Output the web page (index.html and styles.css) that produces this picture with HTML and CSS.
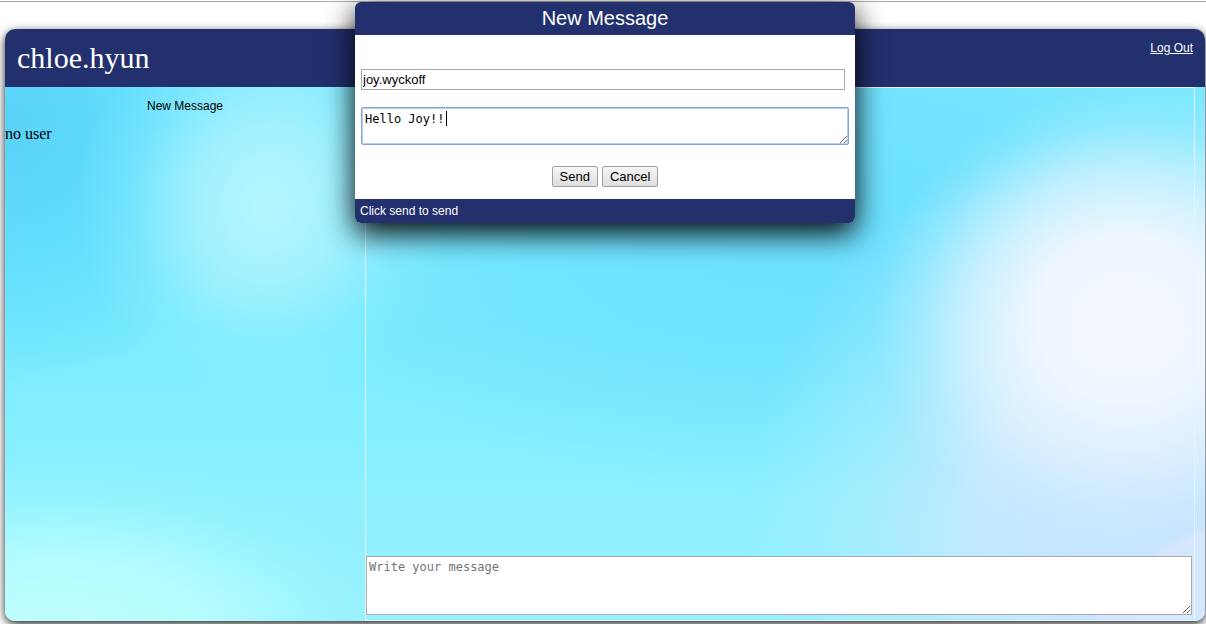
FILE: index.html
```html
<!DOCTYPE html>
<html lang="en">
<head>
<meta charset="utf-8">
<title>Messages</title>
<link rel="stylesheet" href="styles.css">
</head>
<body>
<div class="page">
  <div class="app">
    <header class="app-header">
      <h1 class="user-name">chloe.hyun</h1>
      <a class="logout" href="#">Log Out</a>
    </header>
    <main class="app-body">
      <aside class="sidebar">
        <button class="new-message" type="button">New Message</button>
        <p class="empty">no user</p>
      </aside>
      <section class="chat">
        <textarea class="field chat-input" aria-label="Write your message" placeholder="Write your message"></textarea>
      </section>
    </main>
  </div>
  <form class="dialog" role="dialog" aria-labelledby="dialog-title">
    <h2 class="dialog-title" id="dialog-title">New Message</h2>
    <div class="dialog-body">
      <input class="recipient" type="text" aria-label="Recipient" value="joy.wyckoff">
      <div class="message-wrap">
        <textarea class="field message" aria-label="Message">Hello Joy!!</textarea>
        <span class="caret"></span>
      </div>
      <div class="actions">
        <button class="btn" type="button">Send</button>
        <button class="btn" type="button">Cancel</button>
      </div>
    </div>
    <p class="dialog-footer">Click send to send</p>
  </form>
</div>
</body>
</html>
```
FILE: styles.css
```css
* {
  box-sizing: border-box;
}

body {
  margin: 0;
  background: #fff;
  font-family: "Liberation Sans", Arial, sans-serif;
  font-size: 12px;
  color: #000;
}

.page {
  position: relative;
  display: flex;
  flex-direction: column;
  min-height: 100vh;
  padding: 29px 1px 3px 5px;
  background: linear-gradient(#aaa, #aaa) 0 1px / 100% 1px no-repeat;
}

.app {
  flex: 1;
  display: flex;
  flex-direction: column;
  border-radius: 10px;
  overflow: hidden;
  box-shadow: 0 3px 10px #222;
}

.app-header {
  display: flex;
  justify-content: space-between;
  align-items: flex-start;
  height: 58px;
  padding: 12px;
  background: #22306e;
  color: #fff;
}

.user-name {
  margin: 0;
  font: 30px/34px "Liberation Serif", "Times New Roman", serif;
}

.logout {
  color: #fff;
  line-height: 14px;
}

.app-body {
  flex: 1;
  display: grid;
  grid-template-columns: 30% 1fr;
  background:
    radial-gradient(circle 200px at 105% 118%, rgba(222, 232, 252, 0.6) 97%, rgba(222, 232, 252, 0) 100%),
    radial-gradient(ellipse 250px 230px at 1120px 230px, #f4f6ff 0%, rgba(242, 247, 255, 0.95) 35%, rgba(236, 246, 255, 0.6) 62%, rgba(220, 244, 255, 0.2) 84%, rgba(220, 244, 255, 0) 100%),
    radial-gradient(ellipse 190px 200px at 262px 118px, rgba(184, 245, 255, 0.95) 0%, rgba(172, 243, 255, 0.8) 38%, rgba(150, 240, 255, 0.3) 72%, rgba(140, 238, 255, 0) 100%),
    radial-gradient(ellipse 370px 190px at 50px 104%, #c4ffff 0%, rgba(184, 254, 255, 0.85) 45%, rgba(160, 250, 255, 0.3) 78%, rgba(150, 246, 255, 0) 100%),
    radial-gradient(ellipse 430px 400px at 1170px 430px, #c8e4ff 0%, rgba(198, 232, 255, 0.95) 45%, rgba(184, 236, 255, 0.5) 72%, rgba(160, 236, 255, 0) 100%),
    radial-gradient(ellipse 270px 260px at 0 40px, #58d2f8 0%, rgba(92, 218, 252, 0.8) 50%, rgba(110, 232, 255, 0) 100%),
    radial-gradient(ellipse 560px 280px at 800px 130px, #6cdfff 0%, rgba(110, 226, 255, 0.8) 45%, rgba(120, 234, 255, 0) 100%),
    linear-gradient(180deg, #84ebff 0%, #7aecff 45%, #8cf0ff 75%, #98f0ff 100%);
}

.sidebar {
  display: flex;
  flex-direction: column;
  align-items: center;
  padding-top: 12px;
}

.new-message {
  padding: 0;
  border: 0;
  background: none;
  font: inherit;
  line-height: 14px;
  cursor: pointer;
}

.empty {
  align-self: stretch;
  margin: 12px 0 0;
  font: 16px/18px "Liberation Serif", "Times New Roman", serif;
}

.chat {
  display: flex;
  flex-direction: column;
  justify-content: flex-end;
  margin-right: 10px;
  padding: 0 2px 5px 0;
  border: 1px solid #e2f6fc;
}

.field {
  display: block;
  width: 100%;
  margin: 0;
  padding: 2px;
  border: 1px solid #a9a9a9;
  background: #fff;
  font: 12px/16px "DejaVu Sans Mono", monospace;
  resize: both;
}

.field::placeholder {
  color: #757575;
}

.chat-input {
  height: 59px;
}

.dialog {
  position: absolute;
  top: 2px;
  left: calc(50% + 2px);
  width: 500px;
  transform: translateX(-50%);
  border-radius: 6px;
  overflow: hidden;
  background: #fff;
  box-shadow: 0 10px 30px #000;
}

.dialog-title {
  margin: 0;
  background: #22306e;
  color: #fff;
  font-size: 20px;
  font-weight: 400;
  line-height: 33px;
  text-align: center;
}

.dialog-body {
  padding: 34px 6px 12px;
}

.recipient {
  display: block;
  width: calc(100% - 4px);
  height: 21px;
  padding: 1px;
  border: 1px solid #a9a9a9;
  font: 13px "Liberation Sans", Arial, sans-serif;
}

.message-wrap {
  position: relative;
  margin-top: 17px;
}

.message {
  height: 38px;
  padding: 3px;
  border: 1px solid #83a5dc;
  border-radius: 2px;
  outline: 0;
  box-shadow: inset 0 0 0 1px #b9cdee;
}

.caret {
  position: absolute;
  top: 4px;
  left: 85px;
  width: 1px;
  height: 15px;
  background: #000;
}

.actions {
  display: flex;
  justify-content: center;
  gap: 4px;
  margin-top: 21px;
}

.btn {
  height: 21px;
  padding: 0 7px;
  border: 1px solid #a0a0a0;
  border-radius: 2px;
  background: linear-gradient(#f6f6f6, #dedede);
  font: 13px "Liberation Sans", Arial, sans-serif;
}

.dialog-footer {
  margin: 0;
  padding: 5px;
  background: #22306e;
  color: #fff;
  line-height: 14px;
}
```
